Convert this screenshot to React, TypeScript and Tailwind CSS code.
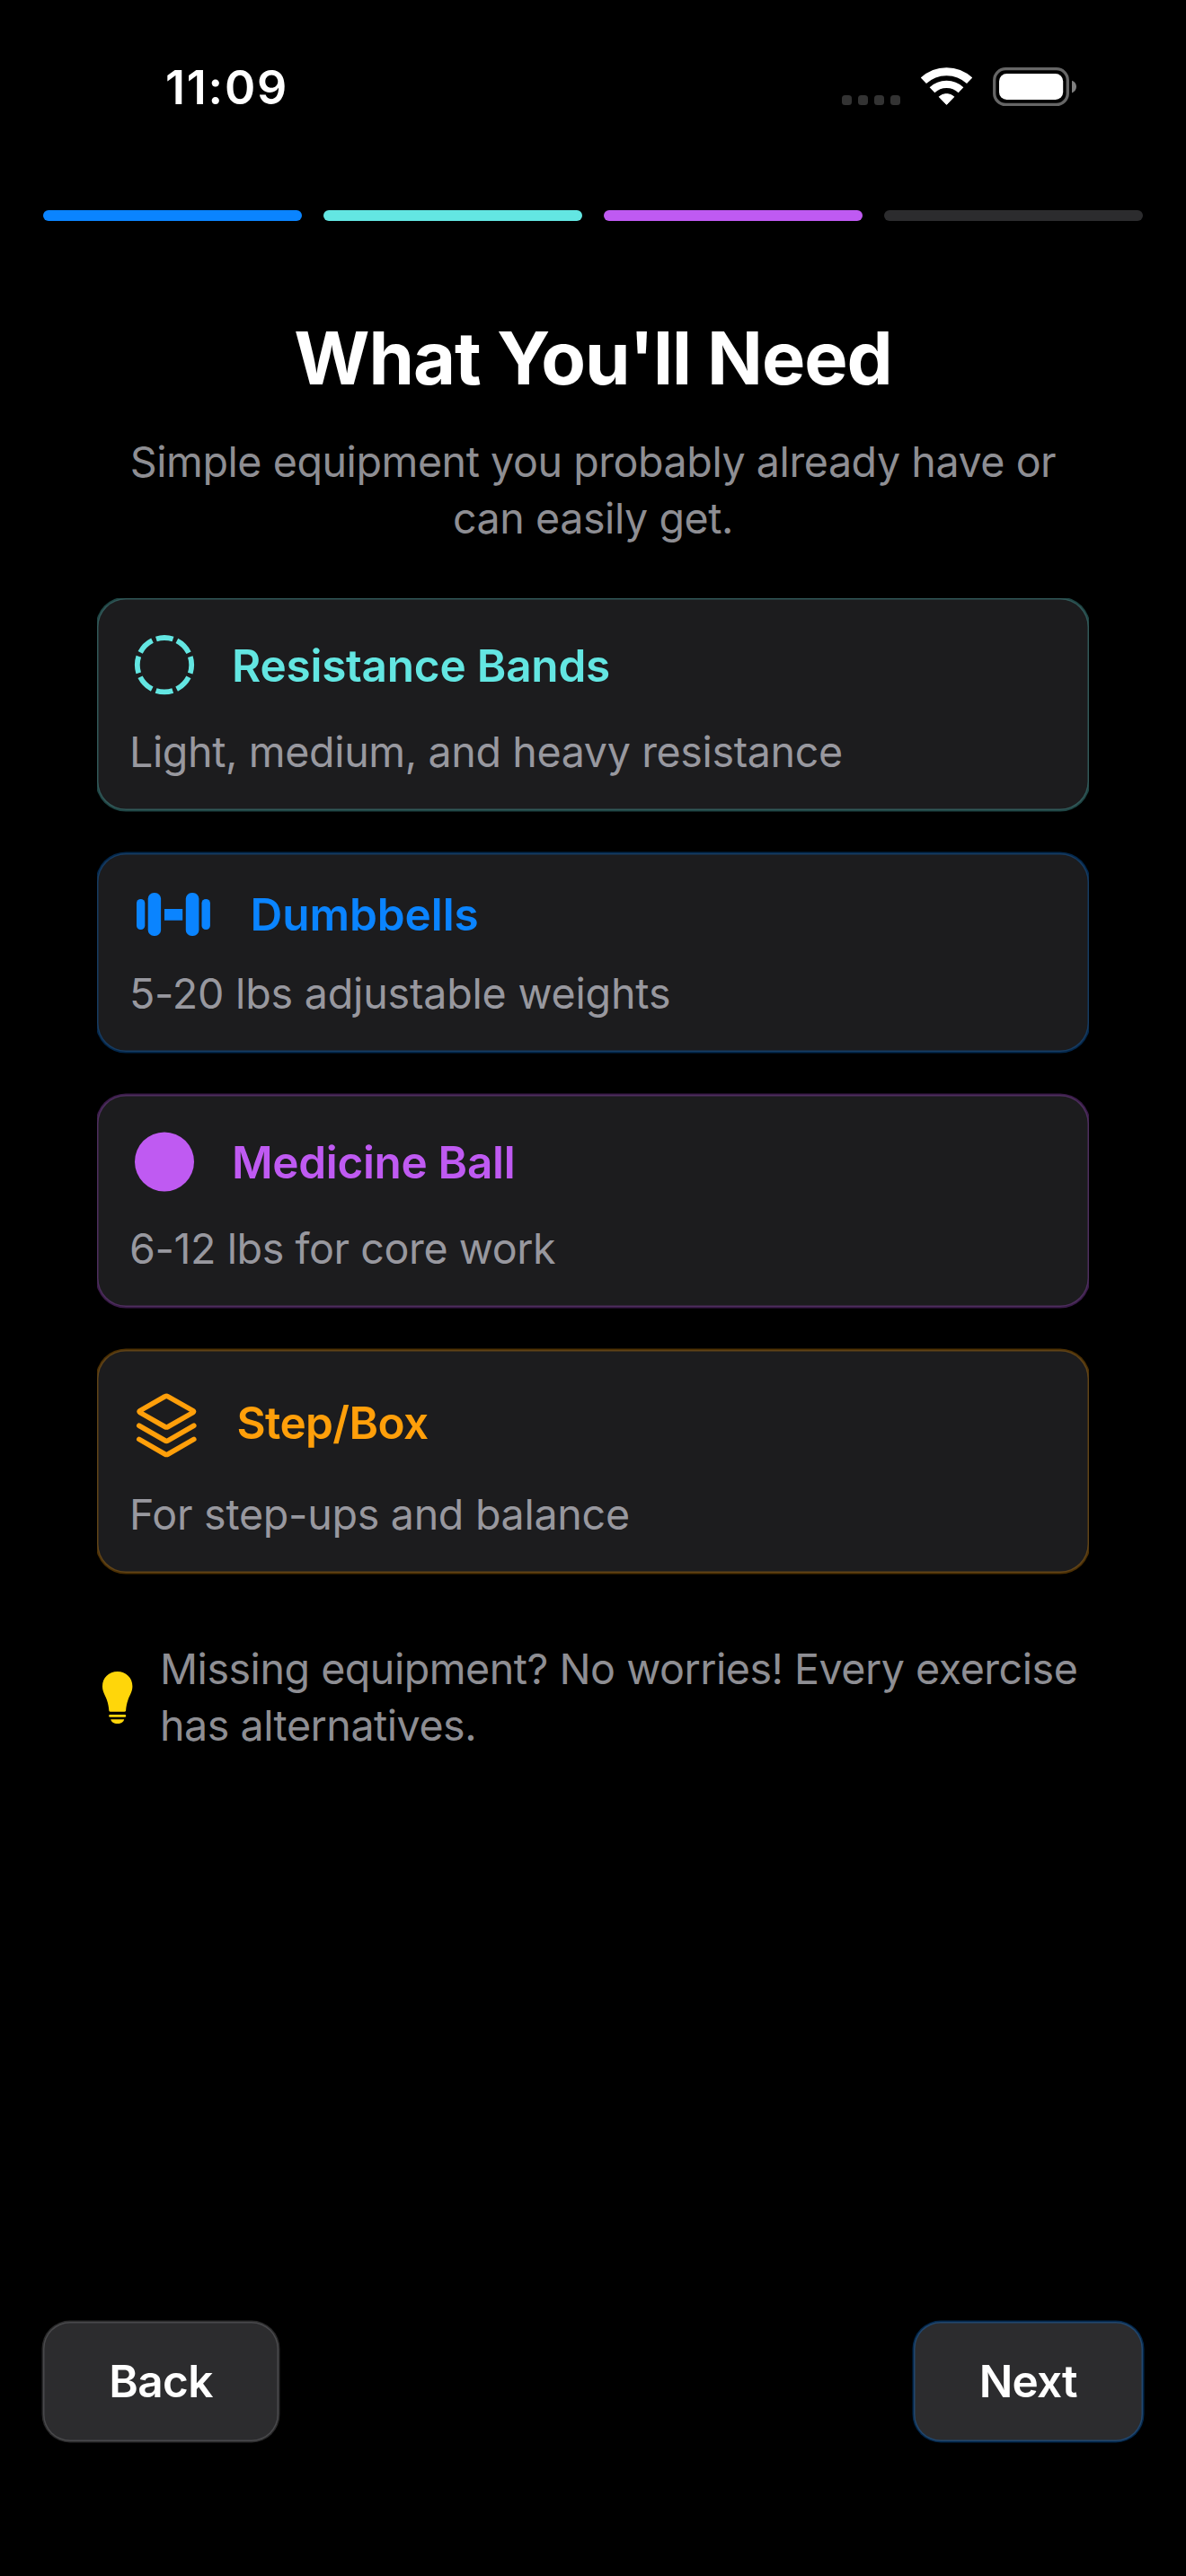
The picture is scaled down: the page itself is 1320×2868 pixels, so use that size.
import type { ReactNode } from "react";

function BandIcon() {
  return (
    <svg width="78" height="78" viewBox="0 0 78 78" fill="none" className="shrink-0">
      <circle cx="39" cy="38.2" r="30.2" stroke="#63e6e2" strokeWidth="5.8" strokeDasharray="19 4.72" strokeDashoffset="9.5" />
    </svg>
  );
}

function DumbbellIcon() {
  return (
    <svg width="98.5" height="62" viewBox="0 0 98.5 62" fill="#0a84ff" className="shrink-0">
      <rect x="8" y="14" width="9.3" height="34" rx="4.6" />
      <rect x="20.7" y="7" width="14.4" height="48" rx="6.6" />
      <rect x="39" y="25" width="20.2" height="12.7" />
      <rect x="62.8" y="7" width="14.6" height="48" rx="6.6" />
      <rect x="80.5" y="14" width="9.4" height="34" rx="4.6" />
    </svg>
  );
}

function BallIcon() {
  return (
    <svg width="78" height="78" viewBox="0 0 78 78" className="shrink-0">
      <circle cx="39" cy="38.4" r="33" fill="#bf5af2" />
    </svg>
  );
}

function StackIcon() {
  return (
    <svg
      width="83.5"
      height="91"
      viewBox="0 0 83.5 91"
      fill="none"
      stroke="#ff9f0a"
      strokeWidth="5.6"
      strokeLinecap="round"
      strokeLinejoin="round"
      className="shrink-0"
    >
      <path d="M39.6 15.8Q41.3 14.8 43 15.8L70.8 31.6Q72.4 32.6 70.8 33.6L43 49.5Q41.3 50.5 39.6 49.5L11.8 33.6Q10.2 32.6 11.8 31.6Z" />
      <path d="M10.8 48.2L39.6 64.8Q41.3 65.8 43 64.8L71.8 48.2" />
      <path d="M10.8 63.4L39.6 80Q41.3 81 43 80L71.8 63.4" />
    </svg>
  );
}

function BulbIcon() {
  return (
    <svg width="46" height="60" viewBox="0 0 46 60" fill="#ffd60a" className="shrink-0">
      <path d="M22.7 1C13.2 1 6 8 6 17.3C6 23.5 8.8 27 10.8 32.2C12.6 37 13 41 13.3 44.4Q13.5 45.8 15 45.8H30.4Q31.9 45.8 32.1 44.4C32.4 41 32.8 37 34.6 32.2C36.6 27 39.4 23.5 39.4 17.3C39.4 8 32.2 1 22.7 1Z" />
      <rect x="13.2" y="48.9" width="19" height="2.9" rx="1.3" />
      <path d="M15.2 54.2H30.2C29.6 57.2 26.8 59 22.7 59S15.8 57.2 15.2 54.2Z" />
    </svg>
  );
}

type Equipment = {
  name: string;
  detail: string;
  icon: ReactNode;
  header: string;
  title: string;
  text: string;
  frame: string;
};

const equipment: Equipment[] = [
  {
    name: "Resistance Bands",
    detail: "Light, medium, and heavy resistance",
    icon: <BandIcon />,
    header: "h-[78px]",
    title: "text-[#63e6e2] tracking-[-0.23px]",
    text: "tracking-[-0.38px]",
    frame: "shadow-[0_0_0_1.5px_rgba(99,230,226,0.3),inset_0_0_0_1.5px_rgba(99,230,226,0.3)]",
  },
  {
    name: "Dumbbells",
    detail: "5-20 lbs adjustable weights",
    icon: <DumbbellIcon />,
    header: "h-[63px]",
    title: "text-[#0a84ff] tracking-[-0.07px]",
    text: "tracking-[-0.2px]",
    frame: "shadow-[0_0_0_1.5px_rgba(10,132,255,0.3),inset_0_0_0_1.5px_rgba(10,132,255,0.3)]",
  },
  {
    name: "Medicine Ball",
    detail: "6-12 lbs for core work",
    icon: <BallIcon />,
    header: "h-[78px]",
    title: "text-[#bf5af2] tracking-[-0.33px]",
    text: "tracking-[-0.42px]",
    frame: "shadow-[0_0_0_1.5px_rgba(191,90,242,0.3),inset_0_0_0_1.5px_rgba(191,90,242,0.3)]",
  },
  {
    name: "Step/Box",
    detail: "For step-ups and balance",
    icon: <StackIcon />,
    header: "h-[90px]",
    title: "text-[#ff9f0a] tracking-[-0.62px]",
    text: "tracking-[-0.29px]",
    frame: "shadow-[0_0_0_1.5px_rgba(255,159,10,0.3),inset_0_0_0_1.5px_rgba(255,159,10,0.3)]",
  },
];

function StatusBar() {
  return (
    <div className="flex h-[196px] items-center justify-between pl-[184px] pr-[122px]">
      <span className="text-[52px] font-semibold leading-none tracking-[1.79px] text-white">11:09</span>
      <div className="flex items-center gap-[23px]">
        <div className="flex gap-[7px] pt-[27px]">
          <span className="size-[11px] rounded-[3.5px] bg-[#333333]" />
          <span className="size-[11px] rounded-[3.5px] bg-[#333333]" />
          <span className="size-[11px] rounded-[3.5px] bg-[#333333]" />
          <span className="size-[11px] rounded-[3.5px] bg-[#333333]" />
        </div>
        <svg width="57" height="48" viewBox="0 0 57 48" fill="none" stroke="#fff">
          <path d="M2.9 15.8A37.5 37.5 0 0 1 54.1 15.8" strokeWidth="9" />
          <path d="M12.5 26.2A23.2 23.2 0 0 1 44.5 26.2" strokeWidth="8.3" />
          <path d="M28.5 42.4L20.2 33.8A12.4 12.4 0 0 1 36.8 33.8Z" fill="#fff" strokeWidth="1" strokeLinejoin="round" />
        </svg>
        <svg width="93" height="48" viewBox="0 0 93 48" fill="none">
          <rect x="1.7" y="2.7" width="81.6" height="39.7" rx="12.5" stroke="#666" strokeWidth="3.3" />
          <rect x="7" y="8" width="71.2" height="29" rx="8.5" fill="#fff" />
          <path d="M88 15.7C91 16.7 93 19.4 93 22.6S91 28.5 88 29.5Z" fill="#808080" />
        </svg>
      </div>
    </div>
  );
}

export default function App() {
  return (
    <div className="flex h-[2868px] w-[1320px] flex-col overflow-hidden bg-black font-[Inter,sans-serif]">
      <StatusBar />

      <div className="mt-[38px] grid grid-cols-4 gap-6 px-12">
        <div className="h-3 rounded-full bg-[#0a84ff]" />
        <div className="h-3 rounded-full bg-[#63e6e2]" />
        <div className="h-3 rounded-full bg-[#bf5af2]" />
        <div className="h-3 rounded-full bg-[#2c2c2e]" />
      </div>

      <h1 className="mt-[101px] text-center text-[81.2px] font-bold leading-[103px] tracking-[-1.05px] text-white">
        What You'll Need
      </h1>
      <p className="mt-[32.5px] text-center text-[46.6px] leading-[63px] tracking-[-0.45px] text-[#8e8e93]">
        Simple equipment you probably already have or
        <br />
        can easily get.
      </p>

      <div className="mx-[108px] mt-[57.5px] flex flex-col gap-12 overflow-hidden pb-1">
        {equipment.map((item) => (
          <section key={item.name} className={`rounded-[32px] bg-[#1c1c1e] p-9 ${item.frame}`}>
            <div className={`flex items-center gap-9 ${item.header}`}>
              {item.icon}
              <h2 className={`text-[49.5px] font-semibold leading-[60px] ${item.title}`}>{item.name}</h2>
            </div>
            <p className={`mt-7 text-[46.6px] leading-[58px] text-[#98989f] ${item.text}`}>{item.detail}</p>
          </section>
        ))}
      </div>

      <div className="mx-[108px] mt-[72px] flex items-center gap-6">
        <BulbIcon />
        <p className="whitespace-nowrap text-[46.6px] leading-[63px] tracking-[-0.49px] text-[#8e8e93]">
          Missing equipment? No worries! Every exercise
          <br />
          has alternatives.
        </p>
      </div>

      <div className="mb-[150px] mt-auto flex justify-between px-12">
        <button className="h-[133px] w-[262px] rounded-[30px] bg-[#2c2c2e] text-[49.5px] font-semibold tracking-[-0.6px] text-white shadow-[0_0_0_1.5px_rgba(142,142,147,0.3),inset_0_0_0_1.5px_rgba(142,142,147,0.3)]">
          Back
        </button>
        <button className="h-[133px] w-[255.5px] rounded-[30px] bg-[#2c2c2e] text-[49.5px] font-semibold tracking-[-0.8px] text-white shadow-[0_0_0_1.5px_rgba(10,132,255,0.3),inset_0_0_0_1.5px_rgba(10,132,255,0.3)]">
          Next
        </button>
      </div>
    </div>
  );
}
